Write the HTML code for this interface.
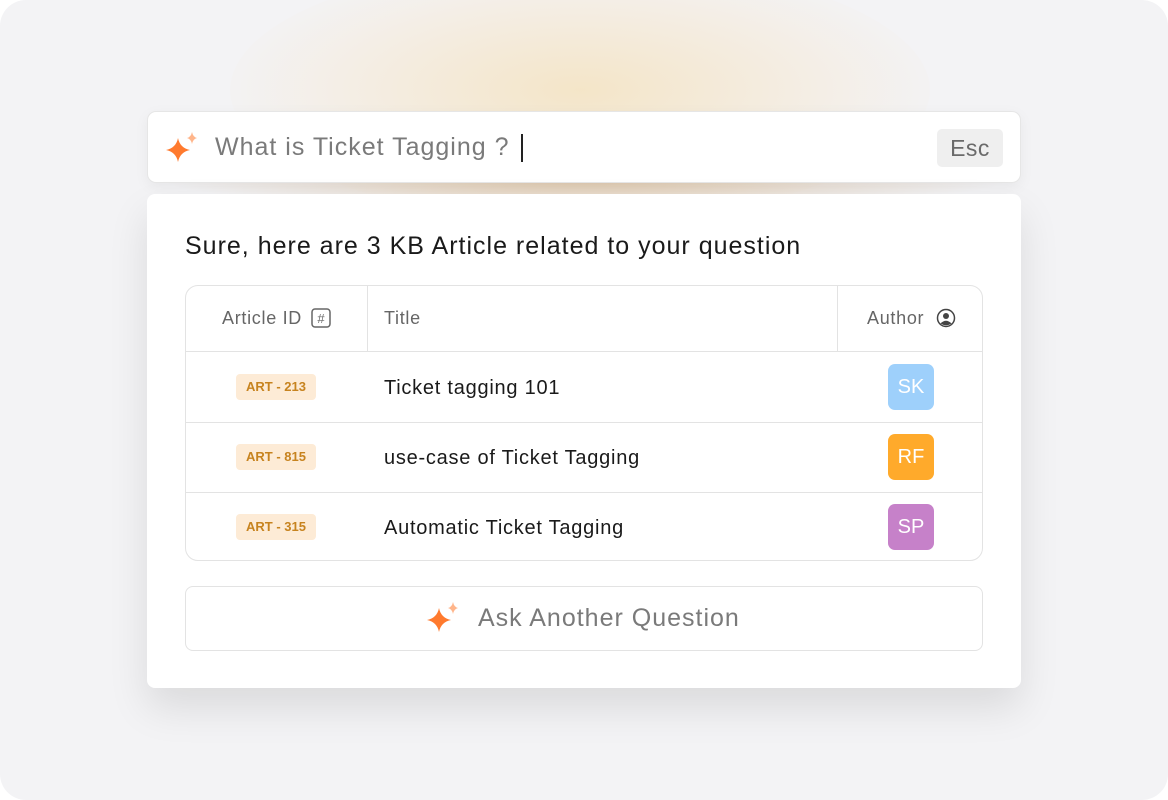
<!DOCTYPE html><html><head><style>
*{box-sizing:border-box;margin:0;padding:0}
body{width:1168px;height:800px;background:#fff;font-family:"Liberation Sans",sans-serif;overflow:hidden}
.bg{position:absolute;left:0;top:0;width:1168px;height:800px;border-radius:26px;background:#f3f3f5;overflow:hidden}
.glow{position:absolute;left:230px;top:-40px;width:700px;height:260px;border-radius:50%;background:radial-gradient(ellipse at center,rgba(245,220,170,.6),rgba(245,228,200,.25) 55%,rgba(243,243,245,0) 75%)}
.glow2{position:absolute;left:160px;top:150px;width:850px;height:60px;background:radial-gradient(ellipse at center,rgba(215,185,150,.7),rgba(243,243,245,0) 70%)}
.search{position:absolute;left:147px;top:111px;width:874px;height:72px;background:#fff;border-radius:9px;border:1px solid #e6e6e6;box-shadow:0 4px 14px rgba(0,0,0,.05)}
.search .q{position:absolute;left:67px;top:21px;font-size:25px;color:#7a7a7a;letter-spacing:1px}
.cursor{position:absolute;left:373px;top:22px;width:2px;height:28px;background:#222}
.esc{position:absolute;right:17px;top:17px;width:66px;height:38px;background:#efefef;border-radius:5px;font-size:23px;color:#6a6a6a;text-align:center;line-height:38px;letter-spacing:.5px}
.card{position:absolute;left:147px;top:194px;width:874px;height:494px;background:#fff;border-radius:8px;box-shadow:0 20px 40px rgba(0,0,0,.1)}
.title{position:absolute;left:38px;top:38px;font-size:25px;color:#1a1a1a;letter-spacing:1px}
.tbl{position:absolute;left:38px;top:91px;width:798px;height:276px;border:1px solid #e3e3e3;border-radius:13px;overflow:hidden}
.hdr{position:absolute;top:0;height:65px;line-height:65px;font-size:18px;color:#666;letter-spacing:.7px}
.vl{position:absolute;top:0;width:1px;height:65px;background:#e3e3e3}
.hl{position:absolute;left:0;width:798px;height:1px;background:#e3e3e3}
.tag{position:absolute;left:50px;width:80px;height:26px;border-radius:4px;background:#fdebd6;color:#c7831f;font-size:13px;font-weight:bold;text-align:center;line-height:26px}
.rt{position:absolute;left:198px;font-size:20px;color:#1a1a1a;letter-spacing:.75px}
.av{position:absolute;left:702px;width:46px;height:46px;border-radius:7px;color:#fff;font-size:20px;text-align:center;line-height:46px}
.btn{position:absolute;left:38px;top:392px;width:798px;height:65px;border:1px solid #e3e3e3;border-radius:8px}
.btn span{position:absolute;left:292px;top:17px;font-size:25px;color:#7a7a7a;letter-spacing:1px}
</style></head><body><div class="bg"><div class="glow"></div><div class="glow2"></div>
<div class="search">
<svg style="position:absolute;left:16px;top:20px" width="36" height="34" viewBox="0 0 36 34"><path d="M14 6 Q16 16 26 18 Q16 20 14 30 Q12 20 2 18 Q12 16 14 6Z" fill="#ff7a2e"/><path d="M28 0 Q29 5 33 6 Q29 7 28 12 Q27 7 23 6 Q27 5 28 0Z" fill="#ffb58a"/></svg>
<div class="q">What is Ticket Tagging ?</div><div class="cursor"></div><div class="esc">Esc</div></div>
<div class="card"><div class="title">Sure, here are 3 KB Article related to your question</div>
<div class="tbl">
<div class="hdr" style="left:36px">Article ID</div>
<svg style="position:absolute;left:125px;top:22px" width="20" height="20" viewBox="0 0 20 20"><rect x="1" y="1" width="18" height="18" rx="3" fill="none" stroke="#666" stroke-width="1.5"/><text x="10" y="15" font-size="13" text-anchor="middle" fill="#666" font-family="Liberation Sans">#</text></svg>
<div class="vl" style="left:181px"></div>
<div class="hdr" style="left:198px">Title</div>
<div class="vl" style="left:651px"></div>
<div class="hdr" style="left:681px">Author</div>
<svg style="position:absolute;left:750px;top:22px" width="20" height="20" viewBox="0 0 20 20"><circle cx="10" cy="10" r="8.5" fill="none" stroke="#444" stroke-width="1.5"/><circle cx="10" cy="8" r="3" fill="#444"/><path d="M4.5 15.5 Q10 10 15.5 15.5 Q10 19 4.5 15.5Z" fill="#444"/></svg>
<div class="hl" style="top:65px"></div><div class="hl" style="top:136px"></div><div class="hl" style="top:206px"></div>
<div class="tag" style="top:88px">ART - 213</div><div class="rt" style="top:91px">Ticket tagging 101</div><div class="av" style="top:78px;background:#9ed0fb">SK</div>
<div class="tag" style="top:158px">ART - 815</div><div class="rt" style="top:161px">use-case of Ticket Tagging</div><div class="av" style="top:148px;background:#ffaa2b">RF</div>
<div class="tag" style="top:228px">ART - 315</div><div class="rt" style="top:231px">Automatic Ticket Tagging</div><div class="av" style="top:218px;background:#c681c9">SP</div>
</div>
<div class="btn"><svg style="position:absolute;left:239px;top:15px" width="36" height="34" viewBox="0 0 36 34"><path d="M14 6 Q16 16 26 18 Q16 20 14 30 Q12 20 2 18 Q12 16 14 6Z" fill="#ff7a2e"/><path d="M28 0 Q29 5 33 6 Q29 7 28 12 Q27 7 23 6 Q27 5 28 0Z" fill="#ffb58a"/></svg><span>Ask Another Question</span></div>
</div></div></body></html>
